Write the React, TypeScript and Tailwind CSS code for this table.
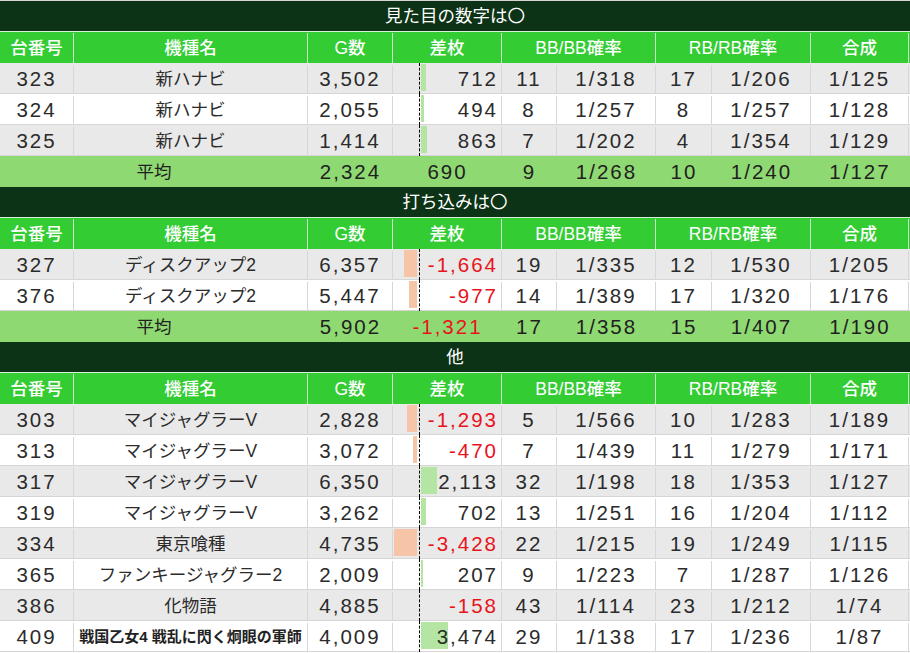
import type { ReactNode } from 'react';

type Row = {
  no: string;
  name: string;
  games: string;
  diff: string;
  bar: number;
  bb: string;
  bbRate: string;
  rb: string;
  rbRate: string;
  total: string;
  small?: boolean;
};

type Avg = {
  games: string;
  diff: string;
  bb: string;
  bbRate: string;
  rb: string;
  rbRate: string;
  total: string;
};

type Section = {
  title: string;
  rows: Row[];
  avg?: Avg;
};

const sections: Section[] = [
  {
    title: '見た目の数字は〇',
    rows: [
      { no: '323', name: '新ハナビ', games: '3,502', diff: '712', bar: 5, bb: '11', bbRate: '1/318', rb: '17', rbRate: '1/206', total: '1/125' },
      { no: '324', name: '新ハナビ', games: '2,055', diff: '494', bar: 3, bb: '8', bbRate: '1/257', rb: '8', rbRate: '1/257', total: '1/128' },
      { no: '325', name: '新ハナビ', games: '1,414', diff: '863', bar: 6, bb: '7', bbRate: '1/202', rb: '4', rbRate: '1/354', total: '1/129' },
    ],
    avg: { games: '2,324', diff: '690', bb: '9', bbRate: '1/268', rb: '10', rbRate: '1/240', total: '1/127' },
  },
  {
    title: '打ち込みは〇',
    rows: [
      { no: '327', name: 'ディスクアップ2', games: '6,357', diff: '-1,664', bar: -13, bb: '19', bbRate: '1/335', rb: '12', rbRate: '1/530', total: '1/205' },
      { no: '376', name: 'ディスクアップ2', games: '5,447', diff: '-977', bar: -8, bb: '14', bbRate: '1/389', rb: '17', rbRate: '1/320', total: '1/176' },
    ],
    avg: { games: '5,902', diff: '-1,321', bb: '17', bbRate: '1/358', rb: '15', rbRate: '1/407', total: '1/190' },
  },
  {
    title: '他',
    rows: [
      { no: '303', name: 'マイジャグラーV', games: '2,828', diff: '-1,293', bar: -10, bb: '5', bbRate: '1/566', rb: '10', rbRate: '1/283', total: '1/189' },
      { no: '313', name: 'マイジャグラーV', games: '3,072', diff: '-470', bar: -4, bb: '7', bbRate: '1/439', rb: '11', rbRate: '1/279', total: '1/171' },
      { no: '317', name: 'マイジャグラーV', games: '6,350', diff: '2,113', bar: 16, bb: '32', bbRate: '1/198', rb: '18', rbRate: '1/353', total: '1/127' },
      { no: '319', name: 'マイジャグラーV', games: '3,262', diff: '702', bar: 5, bb: '13', bbRate: '1/251', rb: '16', rbRate: '1/204', total: '1/112' },
      { no: '334', name: '東京喰種', games: '4,735', diff: '-3,428', bar: -23, bb: '22', bbRate: '1/215', rb: '19', rbRate: '1/249', total: '1/115' },
      { no: '365', name: 'ファンキージャグラー2', games: '2,009', diff: '207', bar: 2, bb: '9', bbRate: '1/223', rb: '7', rbRate: '1/287', total: '1/126' },
      { no: '386', name: '化物語', games: '4,885', diff: '-158', bar: 0, bb: '43', bbRate: '1/114', rb: '23', rbRate: '1/212', total: '1/74' },
      { no: '409', name: '戦国乙女4 戦乱に閃く炯眼の軍師', games: '4,009', diff: '3,474', bar: 27, bb: '29', bbRate: '1/138', rb: '17', rbRate: '1/236', total: '1/87', small: true },
    ],
  },
];

const headers = ['台番号', '機種名', 'G数', '差枚', 'BB/BB確率', 'RB/RB確率', '合成'];
const headerWidths = ['w-[74px]', 'w-[234px]', 'w-[85px]', 'w-[109px]', 'w-[154px]', 'w-[155px]', 'w-[98px]'];

function Cell({ w, className, children }: { w: string; className?: string; children?: ReactNode }) {
  return <div className={`${w} flex h-full shrink-0 items-center justify-center ${className ?? ''}`}>{children}</div>;
}

function DiffCell({ row }: { row: Row }) {
  const neg = row.diff.startsWith('-');
  return (
    <div className="relative flex h-full w-[109px] shrink-0 items-center justify-end border-r border-[#d6d6d6] pr-[3px]">
      <div className="absolute top-[-2px] bottom-[-1px] left-[26px] border-l border-dashed border-black" />
      {row.bar < 0 && (
        <div className="absolute top-[-1px] bottom-[2px] right-[84px] bg-[#f6c4a6]" style={{ width: -row.bar }} />
      )}
      {row.bar > 0 && (
        <div className="absolute top-[-1px] bottom-[2px] left-[28px] bg-[#b4e5a2]" style={{ width: row.bar }} />
      )}
      <span className={`relative ${neg ? 'text-[#e8141c]' : ''}`}>{row.diff}</span>
    </div>
  );
}

function DataRow({ row, index }: { row: Row; index: number }) {
  const line = 'border-r border-[#d6d6d6]';
  return (
    <div
      className={`flex h-[31px] border-b border-[#d6d6d6] pt-[2px] text-[20.5px] tracking-[2px] text-[#2b2b2b] ${
        index % 2 === 0 ? 'bg-[#e9e9e9]' : 'bg-white'
      }`}
    >
      <Cell w="w-[74px]" className={line}>{row.no}</Cell>
      <Cell
        w="w-[234px]"
        className={`${line} tracking-normal ${row.small ? 'text-[15px] font-bold text-[#222]' : 'text-[17.5px]'}`}
      >
        {row.name}
      </Cell>
      <Cell w="w-[85px]" className={line}>{row.games}</Cell>
      <DiffCell row={row} />
      <Cell w="w-[55px]" className={line}>{row.bb}</Cell>
      <Cell w="w-[99px]" className={line}>{row.bbRate}</Cell>
      <Cell w="w-[56px]" className={line}>{row.rb}</Cell>
      <Cell w="w-[99px]" className={line}>{row.rbRate}</Cell>
      <Cell w="w-[98px]" className={line}>{row.total}</Cell>
    </div>
  );
}

function AvgRow({ avg }: { avg: Avg }) {
  return (
    <div className="flex h-[31px] bg-[#8fd973] pt-[2px] text-[20.5px] tracking-[2px] text-[#1f1f1f]">
      <Cell w="w-[308px]" className="text-[17.5px] tracking-normal">平均</Cell>
      <Cell w="w-[85px]">{avg.games}</Cell>
      <Cell w="w-[109px]" className={avg.diff.startsWith('-') ? 'text-[#e8141c]' : ''}>{avg.diff}</Cell>
      <Cell w="w-[55px]">{avg.bb}</Cell>
      <Cell w="w-[99px]">{avg.bbRate}</Cell>
      <Cell w="w-[56px]">{avg.rb}</Cell>
      <Cell w="w-[99px]">{avg.rbRate}</Cell>
      <Cell w="w-[98px]">{avg.total}</Cell>
    </div>
  );
}

function SectionBlock({ section }: { section: Section }) {
  return (
    <div>
      <div className="flex h-[31px] items-center justify-center border-b border-[#d8f0d8] bg-[#0c3315] pt-[1px] text-[17.5px] text-white">
        {section.title}
      </div>
      <div className="flex h-[31px] bg-[#33cc33] pt-[1px] text-[17.5px] font-medium text-white">
        {headers.map((h, i) => (
          <Cell key={h} w={headerWidths[i]} className="border-r border-[#c8f0c8]">
            {h}
          </Cell>
        ))}
      </div>
      {section.rows.map((row, i) => (
        <DataRow key={row.no} row={row} index={i} />
      ))}
      {section.avg && <AvgRow avg={section.avg} />}
    </div>
  );
}

export default function App() {
  return (
    <div className="h-[653px] w-[910px] overflow-hidden bg-white font-['Liberation_Sans','Noto_Sans_CJK_JP',sans-serif]">
      <div className="w-[910px] border-t border-[#d6d6d6]">
        {sections.map((s) => (
          <SectionBlock key={s.title} section={s} />
        ))}
      </div>
    </div>
  );
}
